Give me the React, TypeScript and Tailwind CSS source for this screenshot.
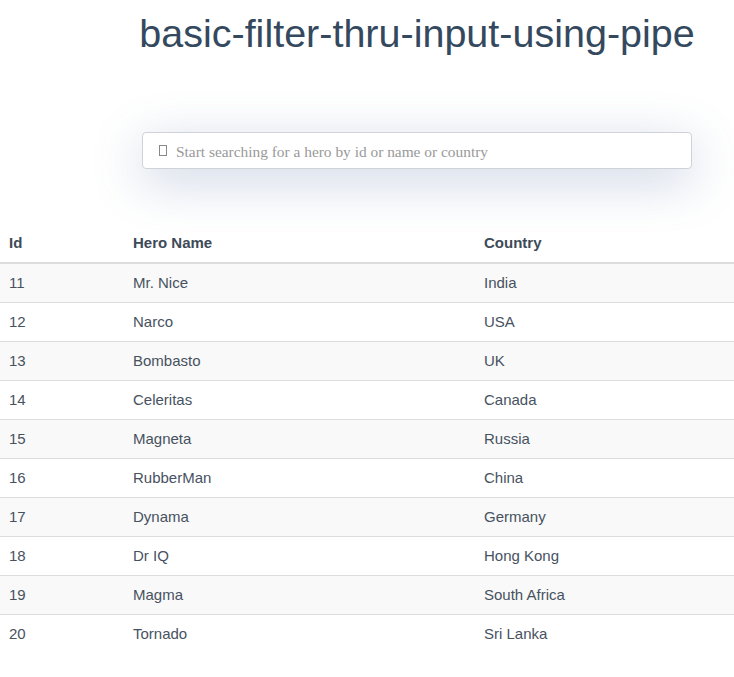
const heroes = [
  { id: 11, name: 'Mr. Nice', country: 'India' },
  { id: 12, name: 'Narco', country: 'USA' },
  { id: 13, name: 'Bombasto', country: 'UK' },
  { id: 14, name: 'Celeritas', country: 'Canada' },
  { id: 15, name: 'Magneta', country: 'Russia' },
  { id: 16, name: 'RubberMan', country: 'China' },
  { id: 17, name: 'Dynama', country: 'Germany' },
  { id: 18, name: 'Dr IQ', country: 'Hong Kong' },
  { id: 19, name: 'Magma', country: 'South Africa' },
  { id: 20, name: 'Tornado', country: 'Sri Lanka' },
];

export default function App() {
  return (
    <div className="min-h-[677px] bg-white font-['Liberation_Sans',Arial,sans-serif] text-[#47525f]">
      <div className="flex flex-col items-center pl-[100px]">
        <h1 className="mt-[11px] text-[39.5px] leading-[44px] text-[#34495e]">
          basic-filter-thru-input-using-pipe
        </h1>
        <div className="mt-[77px] flex h-[37px] w-[550px] items-center rounded border border-[#cfd3d8] bg-white pl-[16px] shadow-[0_12px_50px_rgba(80,105,160,0.3)]">
          <span className="mr-[9px] h-[11px] w-[8px] border border-[#888]" />
          <input
            className="flex-1 bg-transparent pt-[2px] font-['Liberation_Serif',serif] text-[15.4px] text-[#555] outline-none placeholder:text-[#999]"
            placeholder="Start searching for a hero by id or name or country"
          />
        </div>
      </div>
      <table className="mt-[54px] w-full border-collapse text-left text-[15px]">
        <thead>
          <tr className="border-b-2 border-[#ddd] text-[#3d4a57]">
            <th className="w-[125px] px-[9px] py-[9px] font-bold leading-[21px]">Id</th>
            <th className="w-[351px] px-[8px] py-[9px] font-bold leading-[21px]">Hero Name</th>
            <th className="px-[8px] py-[9px] font-bold leading-[21px]">Country</th>
          </tr>
        </thead>
        <tbody>
          {heroes.map((h, i) => (
            <tr
              key={h.id}
              className={`border-[#ddd] ${i < heroes.length - 1 ? 'border-b' : ''} ${i % 2 === 0 ? 'bg-[#f9f9f9]' : 'bg-white'}`}
            >
              <td className="px-[9px] py-[9px] leading-[20px]">{h.id}</td>
              <td className="px-[8px] py-[9px] leading-[20px]">{h.name}</td>
              <td className="px-[8px] py-[9px] leading-[20px]">{h.country}</td>
            </tr>
          ))}
        </tbody>
      </table>
    </div>
  );
}
